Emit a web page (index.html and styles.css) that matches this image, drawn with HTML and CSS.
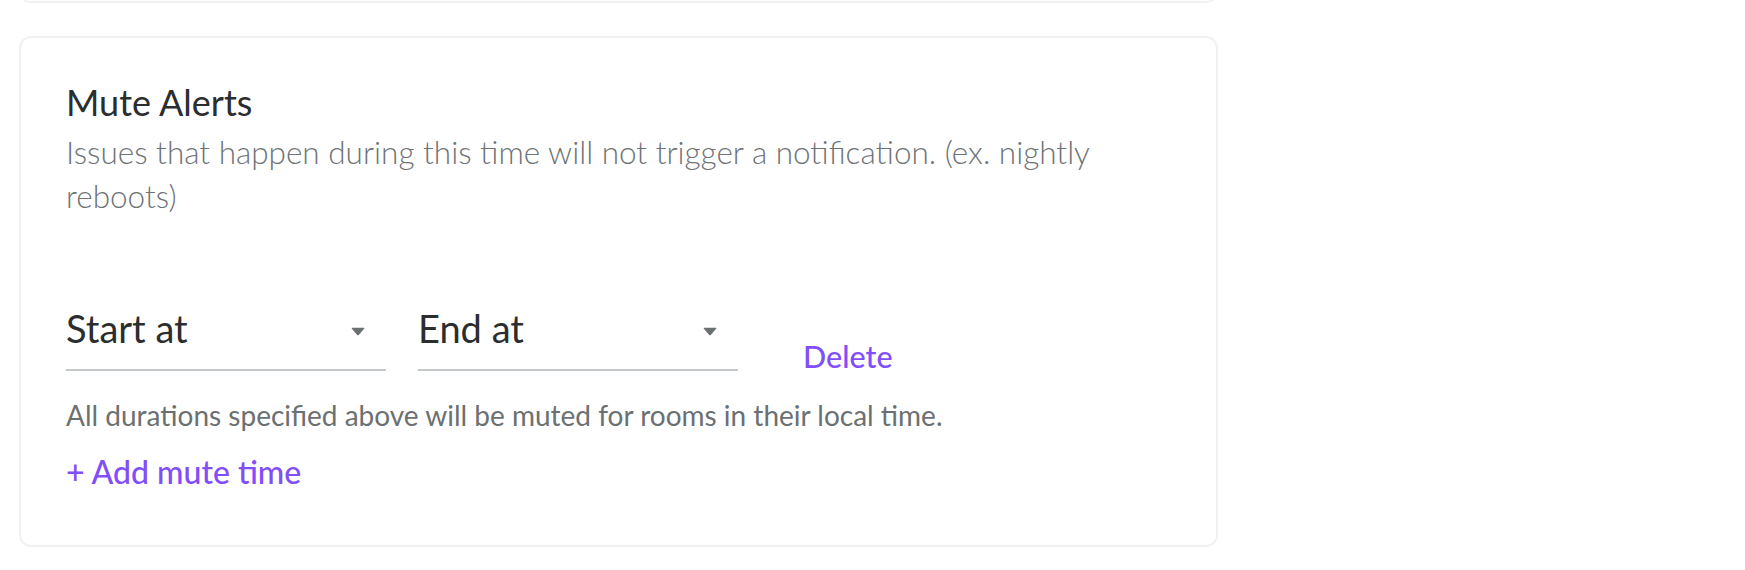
FILE: index.html
```html
<!DOCTYPE html>
<html lang="en">
<head>
<meta charset="utf-8">
<title>Mute Alerts</title>
<link rel="stylesheet" href="styles.css">
</head>
<body>
<div class="page">
  <div class="prev-card"></div>
  <section class="card">
    <h2 class="title">Mute Alerts</h2>
    <p class="desc">Issues that happen during this time will not trigger a notification. (ex. nightly reboots)</p>
    <div class="row">
      <div class="select">
        <span class="select-label">Start at</span>
        <svg class="caret" width="14" height="9" viewBox="0 0 14 9"><path d="M1.2 0.8 H12.8 Q13.8 0.8 13.1 1.8 L7.8 7.9 Q7 8.7 6.2 7.9 L0.9 1.8 Q0.2 0.8 1.2 0.8 Z" fill="#6b7072"/></svg>
      </div>
      <div class="select">
        <span class="select-label">End at</span>
        <svg class="caret" width="14" height="9" viewBox="0 0 14 9"><path d="M1.2 0.8 H12.8 Q13.8 0.8 13.1 1.8 L7.8 7.9 Q7 8.7 6.2 7.9 L0.9 1.8 Q0.2 0.8 1.2 0.8 Z" fill="#6b7072"/></svg>
      </div>
      <a class="link delete" href="#">Delete</a>
    </div>
    <p class="note">All durations specified above will be muted for rooms in their local time.</p>
    <a class="link add" href="#">+ Add mute time</a>
  </section>
</div>
</body>
</html>
```

FILE: styles.css
```css
* { box-sizing: border-box; }
html, body { margin: 0; padding: 0; background: #ffffff; }
body {
  font-family: "Lato", "Noto Sans", sans-serif;
  color: #2b2d2e;
  overflow: hidden;
}
.page {
  padding-left: 19px;
  width: 1218px;
}
.prev-card {
  margin-top: -20px;
  height: 23px;
  border: 2px solid #f1f1f1;
  border-radius: 12px;
}
.card {
  margin-top: 33px;
  height: 511px;
  border: 2px solid #f1f1f1;
  border-radius: 12px;
  padding: 43px 45px 0 45px;
  display: flex;
  flex-direction: column;
  align-items: flex-start;
}
.title {
  margin: 0;
  font-size: 36px;
  line-height: 42px;
  font-weight: 400;
  color: #2b2d2e;
}
.desc {
  margin: 7px 0 0 0;
  max-width: 1060px;
  font-size: 31.5px;
  line-height: 44px;
  font-weight: 300;
  color: #6e7376;
}
.row {
  margin-top: 88px;
  display: flex;
  align-items: flex-end;
  gap: 32px;
}
.select {
  width: 320px;
  display: flex;
  align-items: center;
  justify-content: space-between;
  padding: 0 21px 19px 0;
  border-bottom: 2px solid #c5c8ca;
}
.select-label {
  font-size: 38px;
  line-height: 44px;
  color: #2b2d2e;
}
.caret { display: block; margin-top: 6px; }
.link {
  color: #814efa;
  text-decoration: none;
  font-weight: 500;
}
.delete {
  margin-left: 33px;
  font-size: 30.5px;
  line-height: 29px;
}
.note {
  margin: 28px 0 0 0;
  font-size: 28px;
  line-height: 32px;
  color: #6b7072;
}
.add {
  margin-top: 23px;
  font-size: 32px;
  line-height: 36px;
}
```
